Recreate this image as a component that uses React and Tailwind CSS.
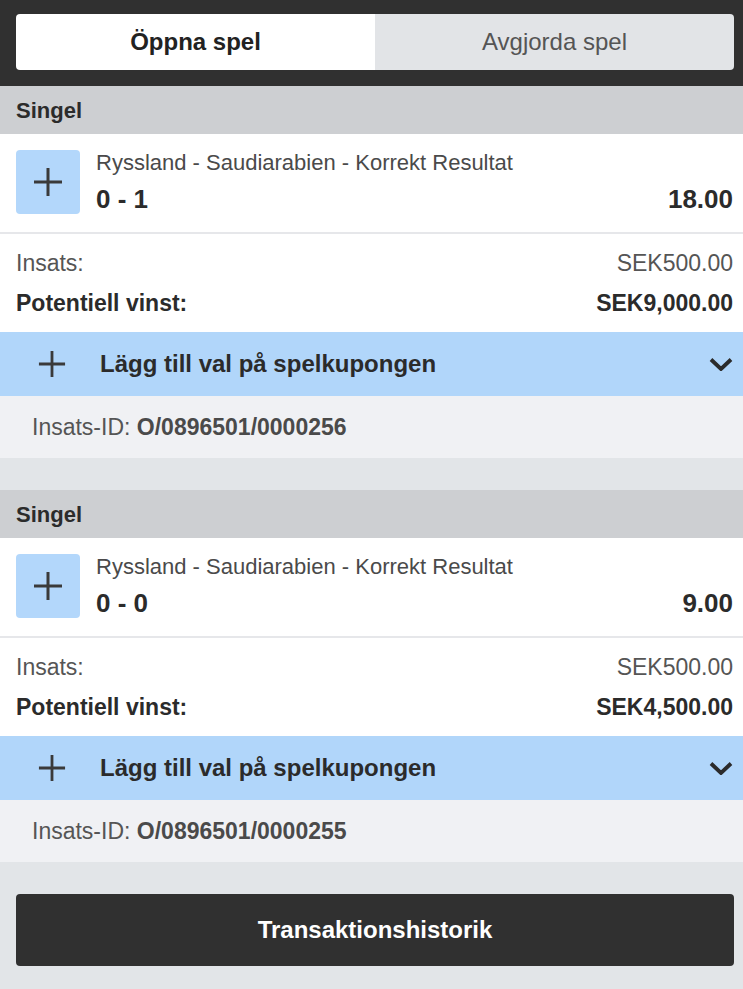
const bets = [
  { odds: '18.00', score: '0 - 1', win: 'SEK9,000.00', id: 'O/0896501/0000256' },
  { odds: '9.00', score: '0 - 0', win: 'SEK4,500.00', id: 'O/0896501/0000255' },
];

function Plus({ className }) {
  return (
    <svg viewBox="0 0 30 30" className={className}>
      <path d="M15 1v28M1 15h28" stroke="#3a3a3a" strokeWidth="3" fill="none" />
    </svg>
  );
}

function Chevron() {
  return (
    <svg viewBox="0 0 24 14" className="w-6 h-[14px]">
      <path d="M2 2.5l10 9.5 10-9.5" stroke="#2b2b2b" strokeWidth="3.8" fill="none" />
    </svg>
  );
}

function BetCard({ bet }) {
  return (
    <div>
      <div className="h-12 bg-[#cdcfd2] px-4 flex items-center text-[22px] font-bold text-[#2b2b2b]">Singel</div>
      <div className="bg-white pl-4 pr-[10px] h-[100px] pb-[2px] flex items-center gap-4 border-b-2 border-[#e6e7ea]">
        <div className="w-16 h-16 rounded bg-[#b3d7fb] flex items-center justify-center shrink-0">
          <Plus className="w-[30px] h-[30px]" />
        </div>
        <div className="flex-1 flex flex-col">
          <div className="text-[22px] leading-6 text-[#4a4a4a]">Ryssland - Saudiarabien - Korrekt Resultat</div>
          <div className="flex justify-between items-center h-7 mt-[11px]">
            <span className="text-[26px] font-bold text-[#2b2b2b]">{bet.score}</span>
            <span className="text-[26px] font-bold text-[#2b2b2b]">{bet.odds}</span>
          </div>
        </div>
      </div>
      <div className="bg-white pl-4 pr-[10px] pt-[17px] pb-[17px]">
        <div className="flex justify-between text-[23px] leading-6 text-[#555]">
          <span>Insats:</span>
          <span>SEK500.00</span>
        </div>
        <div className="flex justify-between text-[23px] leading-6 font-bold text-[#2b2b2b] mt-4">
          <span>Potentiell vinst:</span>
          <span>{bet.win}</span>
        </div>
      </div>
      <div className="h-16 bg-[#b1d6fa] flex items-center pl-[38px] pr-[10px]">
        <Plus className="w-7 h-7" />
        <span className="ml-[34px] flex-1 text-[24px] font-bold text-[#2b2b2b]">Lägg till val på spelkupongen</span>
        <Chevron />
      </div>
      <div className="h-[62px] bg-[#f0f1f4] flex items-center px-8 text-[23px] text-[#555]">
        Insats-ID:&nbsp;<span className="font-bold text-[#4a4a4a]">{bet.id}</span>
      </div>
    </div>
  );
}

export default function App() {
  return (
    <div className="w-[743px] h-[989px] bg-[#e2e5e8] font-['Liberation_Sans',Arial,sans-serif] overflow-hidden">
      <div className="bg-[#303030] pl-4 pr-[9px] pt-[14px] pb-4">
        <div className="flex h-14 rounded overflow-hidden">
          <div className="flex-1 bg-white flex items-center justify-center text-[24px] font-bold text-[#222]">Öppna spel</div>
          <div className="flex-1 bg-[#e2e4e7] flex items-center justify-center text-[24px] text-[#555]">Avgjorda spel</div>
        </div>
      </div>
      <div className="flex flex-col gap-8">
        {bets.map((b) => (
          <BetCard key={b.id} bet={b} />
        ))}
      </div>
      <div className="pl-4 pr-[9px] pt-8">
        <button className="w-full h-[72px] rounded bg-[#303030] text-white text-[24px] font-bold">Transaktionshistorik</button>
      </div>
    </div>
  );
}
